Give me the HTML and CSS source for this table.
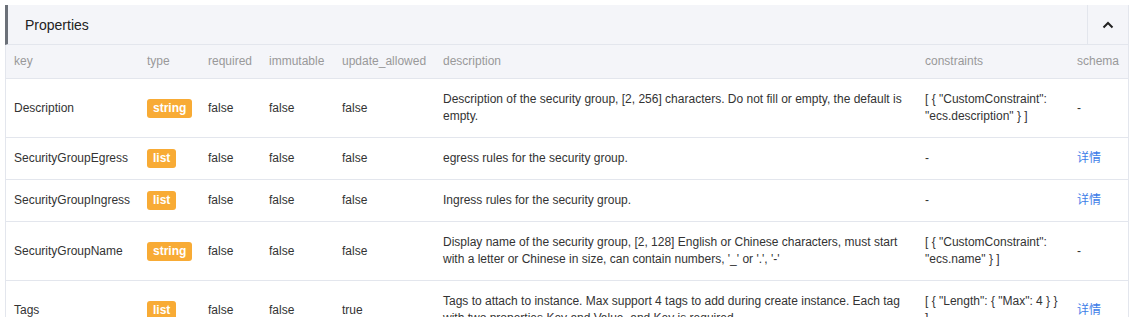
FILE: index.html
```html
<!DOCTYPE html>
<html lang="en">
<head>
    <meta charset="UTF-8" />
    <title>Properties</title>
    <link rel="stylesheet" href="styles.css">
</head>
<body>

    <div class="panel">
        <div class="panel-head">
            <span class="panel-title">Properties</span>
            <span class="panel-toggle">
                <svg width="12" height="8" viewBox="0 0 12 8"><path d="M1.5 6.5 L6 2 L10.5 6.5" fill="none" stroke="#222" stroke-width="2"/></svg>
            </span>
        </div>

        <table class="props">
            <colgroup>
                <col style="width:133px">
                <col style="width:61px">
                <col style="width:61px">
                <col style="width:73px">
                <col style="width:101px">
                <col style="width:482px">
                <col style="width:152px">
                <col>
            </colgroup>
            <thead>
                <tr>
                    <th>key</th>
                    <th>type</th>
                    <th>required</th>
                    <th>immutable</th>
                    <th>update_allowed</th>
                    <th>description</th>
                    <th>constraints</th>
                    <th>schema</th>
                </tr>
            </thead>
            <tbody>
                <tr>
                    <td>Description</td>
                    <td><span class="badge">string</span></td>
                    <td>false</td>
                    <td>false</td>
                    <td>false</td>
                    <td class="desc">Description of the security group, [2, 256] characters. Do not fill or empty, the default is empty.</td>
                    <td>[ { "CustomConstraint": "ecs.description" } ]</td>
                    <td>-</td>
                </tr>
                <tr>
                    <td>SecurityGroupEgress</td>
                    <td><span class="badge">list</span></td>
                    <td>false</td>
                    <td>false</td>
                    <td>false</td>
                    <td class="desc">egress rules for the security group.</td>
                    <td>-</td>
                    <td><a href="#" class="detail-link">详情</a></td>
                </tr>
                <tr>
                    <td>SecurityGroupIngress</td>
                    <td><span class="badge">list</span></td>
                    <td>false</td>
                    <td>false</td>
                    <td>false</td>
                    <td class="desc">Ingress rules for the security group.</td>
                    <td>-</td>
                    <td><a href="#" class="detail-link">详情</a></td>
                </tr>
                <tr>
                    <td>SecurityGroupName</td>
                    <td><span class="badge">string</span></td>
                    <td>false</td>
                    <td>false</td>
                    <td>false</td>
                    <td class="desc">Display name of the security group, [2, 128] English or Chinese characters, must start with a letter or Chinese in size, can contain numbers, '_' or '.', '-'</td>
                    <td>[ { "CustomConstraint": "ecs.name" } ]</td>
                    <td>-</td>
                </tr>
                <tr>
                    <td>Tags</td>
                    <td><span class="badge">list</span></td>
                    <td>false</td>
                    <td>false</td>
                    <td>true</td>
                    <td class="desc">Tags to attach to instance. Max support 4 tags to add during create instance. Each tag with two properties Key and Value, and Key is required.</td>
                    <td>[ { "Length": { "Max": 4 } } ]</td>
                    <td><a href="#" class="detail-link">详情</a></td>
                </tr>
            </tbody>
        </table>
    </div>

</body>
</html>
```

FILE: styles.css
```css
* {
    margin: 0;
    padding: 0;
    box-sizing: border-box;
    font-family: 'Liberation Sans', Arial, 'Noto Sans CJK SC', sans-serif;
}
body {
    background: #ffffff;
    color: #333;
    font-size: 12px;
}

/* Panel */
.panel {
    margin: 5px 2px 0 5px;
    border: 1px solid #e3e6ed;
}
.panel-head {
    display: flex;
    align-items: stretch;
    height: 40px;
    margin: -1px 0 0 -1px;
    background: #f4f5f9;
    border-left: 3px solid #6c7179;
    border-bottom: 1px solid #e3e6ed;
}
.panel-title {
    flex: 1;
    display: flex;
    align-items: center;
    padding-left: 17px;
    font-size: 14px;
    color: #222;
}
.panel-toggle {
    width: 41px;
    display: flex;
    align-items: center;
    justify-content: center;
    border-left: 1px solid #e3e6ed;
}

/* Table */
.props {
    width: 100%;
    table-layout: fixed;
    border-collapse: collapse;
}
.props th,
.props td {
    text-align: left;
    vertical-align: middle;
    line-height: 17px;
    padding: 12px 8px;
}
.props thead {
    background: #f4f5f9;
}
.props th {
    font-weight: 400;
    color: #999;
    padding: 8px 8px;
    border-bottom: 1px solid #e3e6ed;
}
.props tbody tr {
    border-bottom: 1px solid #e3e6ed;
}
.props td.desc {
    padding-right: 14px;
}

/* Type badge */
.badge {
    display: inline-block;
    margin: -3px 0;
    padding: 2px 6px;
    line-height: 15px;
    border-radius: 3px;
    background: #f8ab35;
    color: #fff;
    font-weight: 700;
    font-size: 12px;
    vertical-align: middle;
}

.detail-link {
    color: #3d7de8;
    text-decoration: none;
}
```
